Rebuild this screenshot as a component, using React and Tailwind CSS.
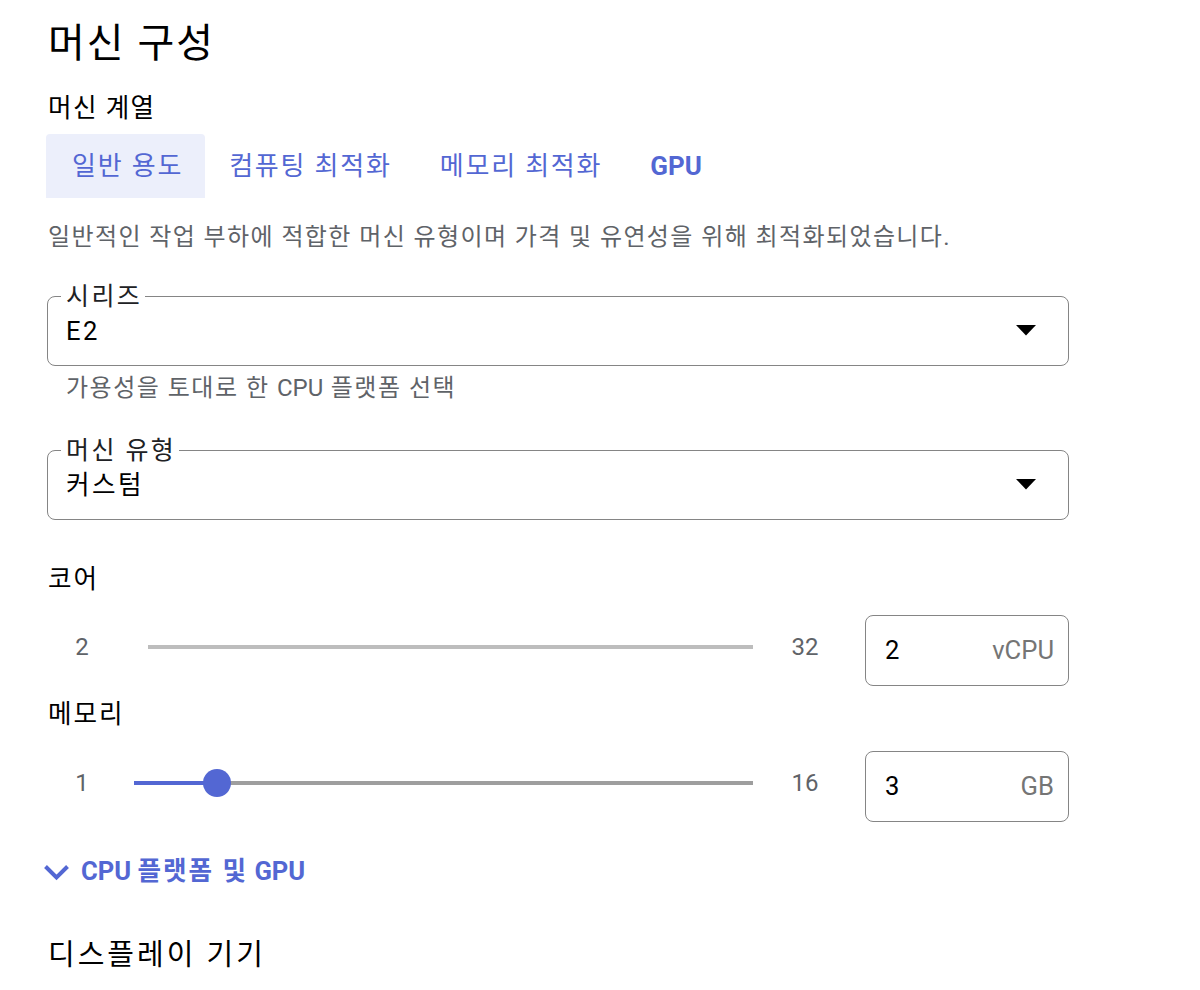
import React from "react";

const FONT = { fontFamily: "Roboto, 'Noto Sans CJK KR', sans-serif" };

function OutlinedSelect({ label, value }) {
  return (
    <div className="relative w-[1022px] h-[70px] ml-[-1px] rounded-[8px] border-[1.5px] border-[#858585] flex items-center pl-[18px] pr-[32px]">
      <span className="absolute left-[13px] top-0 -translate-y-1/2 bg-white pl-[5px] pr-[3px] text-[25px] leading-[26px] tracking-[2.4px] text-[#202124]">
        {label}
      </span>
      <span className="flex-1 text-[25.6px] leading-[32px] tracking-[2.5px] text-black">{value}</span>
      <svg width="20" height="11" viewBox="0 0 20 11" className="mt-[-2px]">
        <path d="M0 0 L20 0 L10 10.5 Z" fill="#000" />
      </svg>
    </div>
  );
}

function NumberBox({ value, unit }) {
  return (
    <div className="w-[204px] h-[71px] rounded-[8px] border-[1.5px] border-[#858585] flex items-center pl-[19px] pr-[14px]">
      <span className="flex-1 text-[25.6px] text-black">{value}</span>
      <span className="text-[25.6px] text-[#757575]">{unit}</span>
    </div>
  );
}

export default function App() {
  return (
    <div style={FONT} className="w-[1200px] h-[990px] bg-white pl-[48px] pt-[20px] overflow-hidden text-[#202124]">
      <h1 className="text-[40px] leading-[48px] tracking-[2px] text-black font-normal">머신 구성</h1>

      <div className="mt-[24px] text-[25.6px] leading-[32px] tracking-[1.4px] text-black">머신 계열</div>

      <div className="mt-[10px] flex ml-[-2px] text-[26px] tracking-[1.8px] text-[#5367d3]">
        <div className="h-[64px] pl-[26px] pr-[22px] flex items-center bg-[#eceffb] rounded-t-[4px]">일반 용도</div>
        <div className="h-[64px] px-[24px] flex items-center">컴퓨팅 최적화</div>
        <div className="h-[64px] px-[24px] flex items-center">메모리 최적화</div>
        <div className="h-[64px] px-[24px] flex items-center font-bold tracking-normal">GPU</div>
      </div>

      <div className="mt-[23px] text-[24px] leading-[32px] tracking-[1.4px] text-[#5f6368]">
        일반적인 작업 부하에 적합한 머신 유형이며 가격 및 유연성을 위해 최적화되었습니다.
      </div>

      <div className="mt-[43px]">
        <OutlinedSelect label="시리즈" value="E2" />
      </div>
      <div className="mt-[6px] pl-[18px] text-[24px] leading-[32px] tracking-[1.5px] text-[#5f6368]">
        가용성을 토대로 한 <span className="tracking-normal">CPU</span> 플랫폼 선택
      </div>

      <div className="mt-[46px]">
        <OutlinedSelect label="머신 유형" value="커스텀" />
      </div>

      <div className="mt-[43px] text-[25.6px] leading-[32px] tracking-[2px] text-black">코어</div>

      <div className="mt-[20px] flex items-center">
        <div className="flex items-center mb-[8px]">
          <span className="w-[68px] text-center text-[24px] text-[#5f6368]">2</span>
          <div className="ml-[32px] w-[605px] h-[4px] bg-[#bdbdbd]" />
          <span className="w-[104px] text-center text-[24px] text-[#5f6368]">32</span>
        </div>
        <div className="ml-[8px]">
          <NumberBox value="2" unit="vCPU" />
        </div>
      </div>

      <div className="mt-[12px] text-[25.6px] leading-[32px] tracking-[2px] text-black">메모리</div>

      <div className="mt-[21px] flex items-center">
        <div className="flex items-center mb-[8px]">
          <span className="w-[68px] text-center text-[24px] text-[#5f6368]">1</span>
          <div className="ml-[18px] w-[619px] h-[4px] bg-[#9e9e9e] relative">
            <div className="absolute left-0 top-0 h-[4px] w-[83px] bg-[#5367d3]" />
            <div className="absolute left-[69px] top-[-12px] w-[28px] h-[28px] rounded-full bg-[#5367d3]" />
          </div>
          <span className="w-[104px] text-center text-[24px] text-[#5f6368]">16</span>
        </div>
        <div className="ml-[8px]">
          <NumberBox value="3" unit="GB" />
        </div>
      </div>

      <div className="mt-[33px] flex items-center ml-[-5px] h-[32px]">
        <svg width="27" height="17" viewBox="0 0 27 17" className="mt-[2px]">
          <path d="M2.5 2.5 L13.5 13.5 L24.5 2.5" fill="none" stroke="#5367d3" strokeWidth="4" />
        </svg>
        <span className="ml-[11px] text-[25.6px] font-bold text-[#5367d3] leading-[32px]">
          CPU <span className="tracking-[2px]">플랫폼 및</span> GPU
        </span>
      </div>

      <div className="mt-[48px] text-[29px] leading-[40px] tracking-[3px] text-black">디스플레이 기기</div>
    </div>
  );
}
